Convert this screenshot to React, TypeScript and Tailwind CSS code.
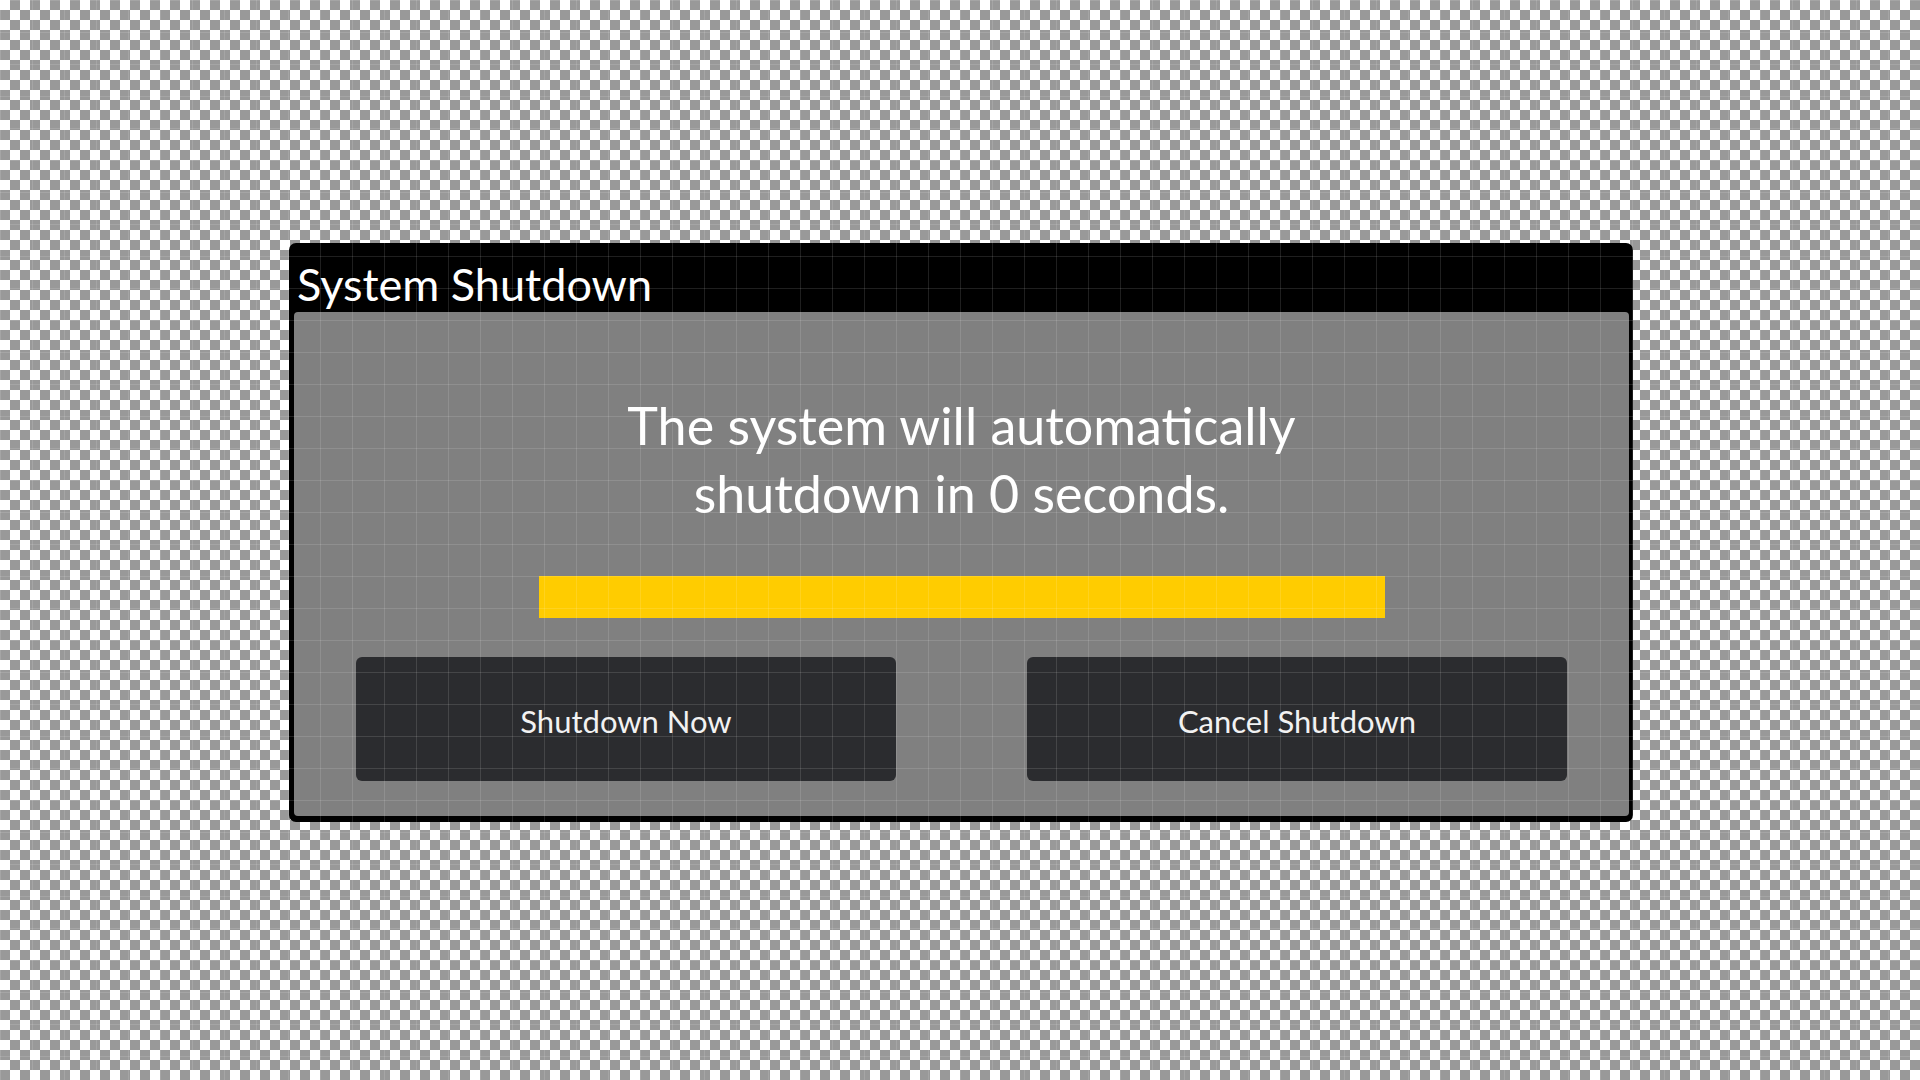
import React from 'react';

// --- Shutdown Dialog mockup ---
export default function App() {
  const seconds = 0;

  return (
    <main className="relative min-h-screen w-full bg-[conic-gradient(#999999_25%,#ffffff_0_50%,#999999_0_75%,#ffffff_0)] bg-[length:20px_20px] font-['Lato',sans-serif]">
      <div className="flex justify-center pt-[243px]">
        {/* Dialog */}
        <div className="ml-[2px] flex w-[1344px] flex-col rounded-[7px] bg-black px-[5px] pb-[6px] pr-[4px]">
          {/* Title bar */}
          <div className="h-[69px] pl-[3px] pt-[19px]">
            <h1 className="text-[45px] leading-[45px] text-white">System Shutdown</h1>
          </div>

          {/* Body */}
          <div className="flex flex-col items-center rounded-[4px] bg-[#808080] px-[62px] pb-[35px] pt-[79px]">
            <p className="text-center text-[52px] leading-[68px] text-white">
              The system will automatically
              <br />
              shutdown in {seconds} seconds.
            </p>

            <div className="mt-[49px] h-[42px] w-[846px] bg-[#ffcc00]" />

            <div className="mt-[39px] flex w-full justify-between">
              <button className="h-[124px] w-[540px] rounded-[6px] bg-[#2b2c2f] pt-[4px] text-[31px] text-[#f2f2f2]">
                Shutdown Now
              </button>
              <button className="h-[124px] w-[540px] rounded-[6px] bg-[#2b2c2f] pt-[4px] text-[31px] text-[#f2f2f2]">
                Cancel Shutdown
              </button>
            </div>
          </div>
        </div>
      </div>

      {/* 32px guide grid over everything */}
      <div className="pointer-events-none absolute inset-0 bg-[linear-gradient(to_right,rgba(255,255,255,0.12)_1px,transparent_1px),linear-gradient(to_bottom,rgba(255,255,255,0.12)_1px,transparent_1px)] bg-[length:32px_32px]" />
    </main>
  );
}
